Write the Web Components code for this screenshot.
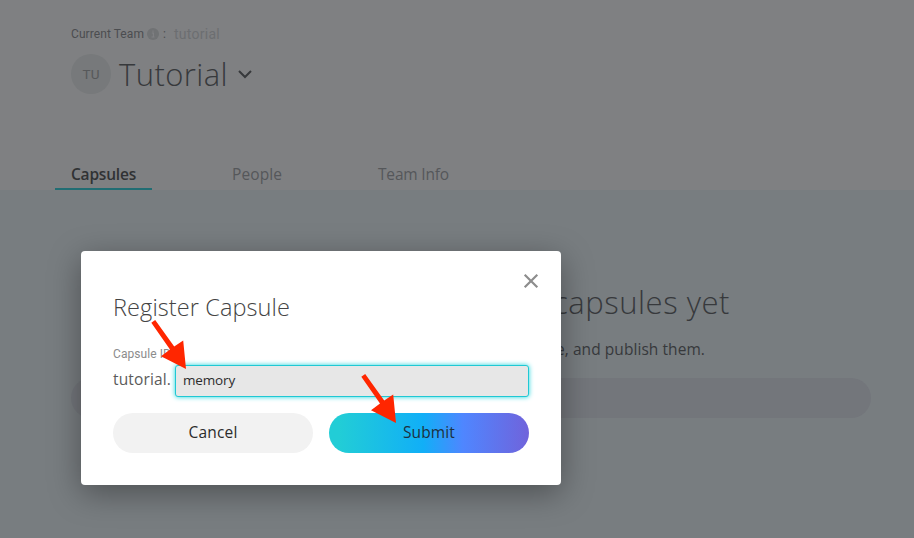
<!DOCTYPE html>
<html lang="en"><head><meta charset="utf-8"><title>Capsules</title>
<style>
html,body{margin:0;height:100%;overflow:hidden}
body{font-family:"Open Sans","Noto Sans",sans-serif;color:#37393c;background:#787d80}
</style></head><body>
<team-page></team-page>
<script>
// Text run tracked to fill a given measure.
class TextRun extends HTMLElement{
  constructor(){super();this.attachShadow({mode:'open'}).innerHTML=`<style>:host{display:block;white-space:nowrap;flex:none}span{display:inline-block}</style><span><slot></slot></span>`}
  connectedCallback(){
    const w=+this.getAttribute('measure'),s=this.shadowRoot.querySelector('span'),n=this.textContent.length;
    this.style.width=w+'px';
    s.style.letterSpacing=((w-s.getBoundingClientRect().width)/n).toFixed(3)+'px';
  }
}
class TeamHeader extends HTMLElement{
  constructor(){super();this.attachShadow({mode:'open'}).innerHTML=`<style>
  :host{display:flex;flex-direction:column;box-sizing:border-box;height:190px;padding:24px 0 0 71px;background:#7f8082}
  .current{display:flex;height:20px;align-items:center;font-family:Roboto,sans-serif;font-size:12px;line-height:20px;color:#4b4d50}
  .current svg{margin:0 4px 0 3px}
  .slug{font-size:14px;color:#6c6e71;margin-left:7px;line-height:18px}
  .team{display:flex;align-items:center;height:40px;margin-top:10px}
  .avatar{width:40px;height:40px;border-radius:50%;background:#77797b;color:#56585a;display:flex;align-items:center;justify-content:center;font-family:Roboto,sans-serif;font-size:13.5px}
  .name{font-size:31px;font-weight:300;line-height:38px;margin-left:8px}
  .team svg{margin-left:10px}
  nav{display:flex;margin-top:auto;margin-left:-16px;gap:64px}
  nav div{box-sizing:border-box;height:32px;padding:0 16px;font-size:15.5px;line-height:32px;color:#55575a;border-bottom:2px solid transparent}
  nav .on{color:#303234;font-weight:600;border-color:#216d73}
  </style>
  <div class="current"><text-run measure="73">Current Team</text-run><svg width="12" height="12"><circle cx="6" cy="6" r="6" fill="#707274"/><path d="M4.8 5h1.6v4M4.5 9h3M6 2.4v1.3" fill="none" stroke="#808184" stroke-width="1.1"/></svg><text-run measure="4">:</text-run><text-run class="slug" measure="46">tutorial</text-run></div>
  <div class="team"><div class="avatar"><text-run measure="17">TU</text-run></div><text-run class="name" measure="109">Tutorial</text-run><svg width="14" height="9" viewBox="0 0 14 9"><path d="M1 1l6 6 6-6" fill="none" stroke="#37393c" stroke-width="2"/></svg></div>
  <nav><div class="on"><text-run measure="65">Capsules</text-run></div><div><text-run measure="50">People</text-run></div><div><text-run measure="71">Team Info</text-run></div></nav>`}
}
class EmptyState extends HTMLElement{
  constructor(){super();this.attachShadow({mode:'open'}).innerHTML=`<style>
  :host{display:flex;flex-direction:column;height:348px;padding:92px 43px 0 71px;box-sizing:border-box}
  .title{font-size:31px;line-height:40px;height:40px;font-weight:300;margin-left:482px}
  .copy{font-size:15.5px;line-height:20px;margin:17px 0 0 485px}
  .bar{height:40px;margin-top:19px;border-radius:20px;background:#73767b}
  </style><text-run class="title" measure="177">capsules yet</text-run><text-run class="copy" measure="149">e, and publish them.</text-run><div class="bar"></div>`}
}
class PillButton extends HTMLElement{
  constructor(){super();this.attachShadow({mode:'open'}).innerHTML=`<style>
  :host{display:flex;flex:1;height:40px;box-sizing:border-box;padding-bottom:2px;border-radius:20px;background:#f2f2f2;align-items:center;justify-content:center;font-size:15.5px;color:#2b2b2b}
  :host([primary]){background:linear-gradient(90deg,#22cdd6 0%,#22cdd6 5%,#11aff7 47%,#4f86ff 67%,#7063db 100%);color:#1d3040}
  </style><slot></slot>`}
}
class RegisterDialog extends HTMLElement{
  constructor(){super();this.attachShadow({mode:'open'}).innerHTML=`<style>
  :host{position:absolute;left:81px;top:251px;width:480px;height:234px;box-sizing:border-box;padding:22px 32px 32px;background:#fff;border-radius:4px;box-shadow:0 8px 32px rgba(0,0,0,.36);display:flex;flex-direction:column}
  .close{align-self:flex-end;margin-right:-10px;width:16px;height:16px}
  .title{font-size:23.5px;font-weight:300;line-height:32px;height:32px;color:#444;margin-top:2px}
  .label{font-family:Roboto,sans-serif;font-size:12px;line-height:16px;color:#8c8c8c;margin-top:23px}
  .field{display:flex;gap:4px;margin-top:3px;height:32px}
  .prefix{font-size:15.5px;line-height:28px;color:#5b5b5b}
  .input{flex:1;box-sizing:border-box;border:1px solid #20c8d4;border-radius:3px;background:#e7e7e7;box-shadow:0 0 5px #20d5dc;padding-left:7px;font-size:13.5px;line-height:28px;color:#2d2d2d}
  .actions{display:flex;gap:16px;margin-top:16px}
  </style>
  <svg class="close" viewBox="0 0 16 16"><path d="M1.7 1.7l12.6 12.6M14.3 1.7L1.7 14.3" stroke="#8d8d8d" stroke-width="2.2"/></svg>
  <text-run class="title" measure="177">Register Capsule</text-run>
  <text-run class="label" measure="58">Capsule ID</text-run>
  <div class="field"><text-run class="prefix" measure="58">tutorial.</text-run><div class="input"><text-run measure="52">memory</text-run></div></div>
  <div class="actions"><pill-button><text-run measure="49">Cancel</text-run></pill-button><pill-button primary><text-run measure="52">Submit</text-run></pill-button></div>`}
}
class PointerArrow extends HTMLElement{
  constructor(){super();this.attachShadow({mode:'open'}).innerHTML=`<style>:host{position:absolute;width:37px;height:50px}svg{display:block}</style><svg width="37" height="50"><path d="M1.3 2.8L5.2 0 24.2 26.6 33.2 20.4 36 49 11 36.2 20 29.5Z" fill="#ff2600"/></svg>`}
}
class TeamPage extends HTMLElement{
  constructor(){super();this.attachShadow({mode:'open'}).innerHTML=`<style>:host{display:block;position:relative;width:914px;height:538px;overflow:hidden}.a{left:150px;top:320px}.b{left:360px;top:374px}</style><team-header></team-header><empty-state></empty-state><register-dialog></register-dialog><pointer-arrow class="a"></pointer-arrow><pointer-arrow class="b"></pointer-arrow>`}
}
customElements.define('team-header',TeamHeader);
customElements.define('empty-state',EmptyState);
customElements.define('pill-button',PillButton);
customElements.define('register-dialog',RegisterDialog);
customElements.define('pointer-arrow',PointerArrow);
customElements.define('team-page',TeamPage);
customElements.define('text-run',TextRun);
</script></body></html>
